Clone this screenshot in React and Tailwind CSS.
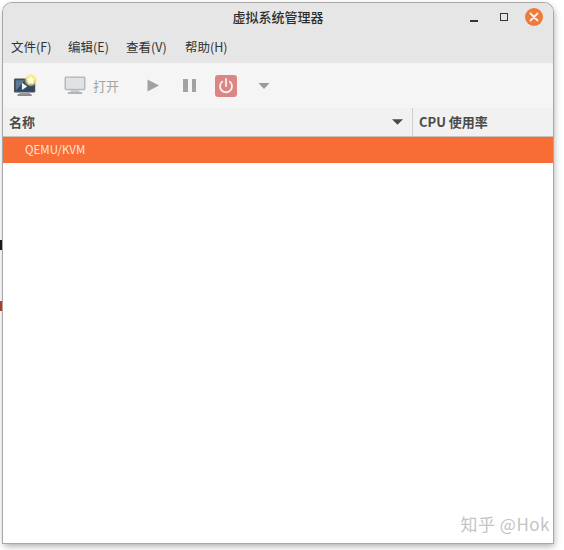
const cjk = '"Noto Sans CJK SC", "Noto Sans", sans-serif';

function NewVmIcon() {
  return (
    <svg width="25" height="23" viewBox="0 0 28 26" className="shrink-0">
      <defs>
        <radialGradient id="star" cx="0.5" cy="0.5" r="0.5">
          <stop offset="0" stopColor="#fffde0" />
          <stop offset="0.55" stopColor="#f6ee6c" />
          <stop offset="1" stopColor="#f0e860" stopOpacity="0.3" />
        </radialGradient>
      </defs>
      <rect x="1" y="5" width="24" height="16" rx="1.5" fill="#4a4d50" />
      <rect x="3" y="7" width="20" height="12" fill="#2f4a68" />
      <path d="M3 19 L13 7 L3 7 Z" fill="#5d7a96" />
      <path d="M10 10 l6 4 l-6 4 z" fill="#f4f4f0" />
      <rect x="7" y="21" width="12" height="2" fill="#a0a3a5" />
      <rect x="5" y="23" width="16" height="1.6" fill="#66696b" />
      <circle cx="20" cy="7" r="7" fill="url(#star)" />
      <path d="M20 2 l1.4 3.4 l3.6 .3 l-2.8 2.3 l.9 3.5 l-3.1 -1.9 l-3.1 1.9 l.9 -3.5 l-2.8 -2.3 l3.6 -.3 z" fill="#fffef0" />
    </svg>
  );
}

function MonitorIcon() {
  return (
    <svg width="22" height="19" viewBox="0 0 23 20" className="shrink-0">
      <rect x="0.5" y="0.5" width="22" height="14.5" rx="1.5" fill="#b4b8ba" />
      <rect x="2" y="2" width="19" height="11.5" fill="#dfe3e5" />
      <rect x="7" y="15" width="9" height="2" fill="#c4c6c7" />
      <rect x="4" y="17" width="15" height="1.8" fill="#a9abac" />
    </svg>
  );
}

function PowerIcon() {
  return (
    <div className="flex h-[22px] w-[22px] items-center justify-center rounded-[3px] bg-[#dd8585]">
      <svg width="18" height="18" viewBox="0 0 18 18" fill="none" stroke="#f7f3f2" strokeWidth="1.8" strokeLinecap="round">
        <path d="M5.2 4.6 A6 6 0 1 0 12.8 4.6" />
        <path d="M9 2 V9" />
      </svg>
    </div>
  );
}

function MenuItem({ name, hot, className }) {
  return <span className={className}>{name}({hot})</span>;
}

export default function App() {
  return (
    <div className="relative h-[550px] w-[564px] overflow-hidden bg-white" style={{ fontFamily: cjk }}>
      {/* scraps of the desktop behind the window */}
      <div className="absolute left-0 top-[240px] h-[10px] w-[3px] bg-[#1a1a1a]" />
      <div className="absolute left-0 top-[301px] h-[10px] w-[3px] bg-[#b5442a]" />

      <div className="absolute left-[3px] top-[3px] flex h-[540px] w-[550px] flex-col overflow-hidden rounded-t-[9px] bg-white shadow-[0_0_0_1px_#a8a8a8,1px_3px_7px_rgba(0,0,0,0.35)]">
        {/* title bar */}
        <div className="relative flex h-[30px] shrink-0 items-center justify-center bg-[#e6e6e6] pb-[2px] text-[13px] font-medium text-[#2e2e2e]">
          <span>虚拟系统管理器</span>
          <div className="absolute left-[467px] top-[17px] h-[1.5px] w-[8px] bg-[#333]" />
          <div className="absolute left-[497px] top-[10px] h-[8px] w-[8px] border border-[#333]" />
          <div className="absolute left-[522px] top-[5px] flex h-[18px] w-[18px] items-center justify-center rounded-full bg-[#ee7a3c]">
            <svg width="10" height="10" viewBox="0 0 10 10" stroke="#fbeee6" strokeWidth="1.8" strokeLinecap="round">
              <path d="M1.5 1.5 L8.5 8.5 M8.5 1.5 L1.5 8.5" />
            </svg>
          </div>
        </div>

        {/* menu bar */}
        <div className="flex h-[30px] shrink-0 items-center bg-[#e6e6e6] pb-[1px] pl-[8px] text-[12.5px] text-[#333]">
          <MenuItem name="文件" hot="F" className="w-[57px]" />
          <MenuItem name="编辑" hot="E" className="w-[58px]" />
          <MenuItem name="查看" hot="V" className="w-[59px]" />
          <MenuItem name="帮助" hot="H" />
        </div>

        {/* toolbar */}
        <div className="flex h-[45px] shrink-0 items-center bg-[#f5f5f5] pl-[10px]">
          <NewVmIcon />
          <div className="ml-[26px]"><MonitorIcon /></div>
          <span className="ml-[7px] text-[13px] text-[#a4a4a4]">打开</span>
          <svg width="12" height="13" viewBox="0 0 12 13" className="ml-[28px]"><path d="M0.5 0.5 L12 6.5 L0.5 12.5 Z" fill="#a2a2a2" /></svg>
          <div className="ml-[24px] flex gap-[4px]">
            <div className="h-[13px] w-[4.5px] bg-[#a2a2a2]" />
            <div className="h-[13px] w-[4.5px] bg-[#a2a2a2]" />
          </div>
          <div className="ml-[19px]"><PowerIcon /></div>
          <svg width="12" height="6" viewBox="0 0 13 7" className="ml-[21px]"><path d="M0 0 H13 L6.5 7 Z" fill="#9a9a9a" /></svg>
        </div>

        {/* column headers */}
        <div className="flex h-[29px] shrink-0 items-stretch border-b border-[#c8c2bc] bg-[#f1f1f1] text-[13px] font-bold text-[#4a4a4a]">
          <div className="flex w-[410px] items-center justify-between border-r border-[#cfcfcf] pl-[6px] pr-[9px]">
            <span>名称</span>
            <svg width="11" height="6" viewBox="0 0 12 6"><path d="M0 0 H12 L6 6 Z" fill="#4a4a4a" /></svg>
          </div>
          <div className="flex items-center pl-[6px]">CPU 使用率</div>
        </div>

        {/* connection list */}
        <div className="flex h-[26px] shrink-0 items-center bg-[#f76d35] pl-[22px] text-[11.5px] text-[#fde3d6]">
          QEMU/KVM
        </div>
        <div className="relative flex-1 bg-white">
          <div className="absolute bottom-[7px] right-[3px] text-[17px] tracking-[0.5px] text-[#c4c4c4]">知乎 @Hok</div>
        </div>
      </div>
    </div>
  );
}
